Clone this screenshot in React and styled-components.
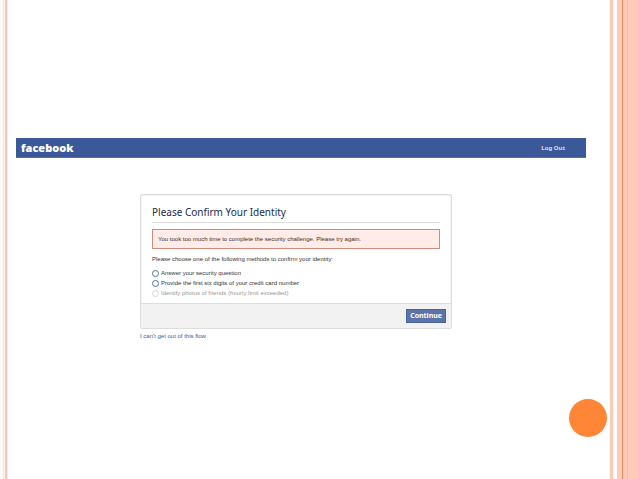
import React from "react";
import styled, { createGlobalStyle } from "styled-components";

const GlobalStyle = createGlobalStyle`
  * {
    box-sizing: border-box;
  }
  body {
    margin: 0;
    background: #ffffff;
    color: #333333;
    font-family: "Liberation Sans", Arial, sans-serif;
    font-size: 6px;
    line-height: 10px;
  }
  button, input {
    font-family: inherit;
    margin: 0;
  }
`;

const Slide = styled.div`
  display: grid;
  grid-template-columns: 16px 1fr 28px;
  min-height: 100vh;
  position: relative;
`;
const Stripes = styled.div`
  display: flex;
`;
const Stripe = styled.div`
  flex: ${props => (props.$wide ? "1" : `0 0 ${props.$size}px`)};
  background: ${props => props.$color};
`;
const Page = styled.div`
  padding: 138px 24px 0 0;
`;
const TopBar = styled.header`
  display: flex;
  align-items: center;
  justify-content: space-between;
  height: 20px;
  padding: 0 21px 0 5px;
  background: #3b5998;
  border-bottom: 1px solid #5470a8;
`;
const Logo = styled.div`
  color: #ffffff;
  font-family: "Open Sans", sans-serif;
  font-size: 11px;
  font-weight: 800;
  line-height: 18px;
`;
const LogOut = styled.a`
  color: #d8dfee;
  font-family: "Noto Sans", "Open Sans", sans-serif;
  font-weight: bold;
  text-decoration: none;
`;
const Main = styled.main`
  padding: 36px 10px 0 0;
`;
const Flow = styled.div`
  max-width: 312px;
  margin: 0 auto;
`;
const Card = styled.form`
  border: 1px solid #dddddd;
  border-radius: 2px;
  box-shadow: inset 0 0 0 1px #f4f4f4;
`;
const Body = styled.div`
  padding: 8px 11px 5px;
`;
const Title = styled.h1`
  margin: 0 0 6px;
  padding-bottom: 1px;
  border-bottom: 1px solid #dddddd;
  color: #1c2a47;
  font-family: "Noto Sans", "Open Sans", sans-serif;
  font-size: 10px;
  font-weight: 400;
  line-height: 18px;
`;
const Alert = styled.div`
  padding: 4px 5px;
  border: 1px solid #cf8a78;
  background: #ffebe8;
`;
const Methods = styled.fieldset`
  margin: 0;
  padding: 5px 0 0;
  border: none;
`;
const Legend = styled.p`
  margin: 0 0 4px;
`;
const Option = styled.label`
  display: flex;
  align-items: center;
  gap: 2px;
  color: ${props => (props.$disabled ? "#999999" : "#333333")};
`;
const Radio = styled.input`
  appearance: none;
  width: 7px;
  height: 7px;
  border: 1px solid #4f7396;
  border-radius: 50%;
  background: #ffffff;
  &:checked {
    background: #4f7396;
  }
  &:disabled {
    border-color: #d5d5d5;
  }
`;
const Footer = styled.div`
  display: flex;
  justify-content: flex-end;
  padding: 5px;
  border-top: 1px solid #dddddd;
  background: #f2f2f2;
`;
const Continue = styled.button`
  height: 14px;
  padding: 0 3px;
  border: 1px solid #4a649d;
  background: #5b74a8;
  color: #ffffff;
  font-family: "Noto Sans", "Open Sans", sans-serif;
  font-size: 7px;
  font-weight: bold;
  line-height: 12px;
`;
const ExitLink = styled.a`
  display: block;
  width: fit-content;
  margin-top: 2px;
  color: #3b5998;
  text-decoration: none;
`;
const Disc = styled.div`
  position: absolute;
  right: 31px;
  bottom: 42px;
  width: 38px;
  height: 38px;
  border-radius: 50%;
  background: #ff8637;
`;

const methods = [
  { id: "question", label: "Answer your security question" },
  { id: "card", label: "Provide the first six digits of your credit card number" },
  {
    id: "photos",
    label: "Identify photos of friends (hourly limit exceeded)",
    disabled: true
  }
];

const App = () => {
  return (
    <React.Fragment>
      <GlobalStyle />
      <Slide>
        <Stripes>
          <Stripe $size={3} $color="#fffaf7" />
          <Stripe $size={1} $color="#fde3d8" />
          <Stripe $size={1} $color="#fff6f1" />
          <Stripe $size={2} $color="#f3c9bb" />
          <Stripe $size={1} $color="#fdeae3" />
          <Stripe $wide $color="#ffffff" />
        </Stripes>
        <Page>
          <TopBar>
            <Logo>facebook</Logo>
            <LogOut href="#">Log Out</LogOut>
          </TopBar>
          <Main>
            <Flow>
              <Card onSubmit={event => event.preventDefault()}>
                <Body>
                  <Title>Please Confirm Your Identity</Title>
                  <Alert role="alert">
                    You took too much time to complete the security challenge.
                    Please try again.
                  </Alert>
                  <Methods aria-labelledby="methods-legend">
                    <Legend id="methods-legend">
                      Please choose one of the following methods to confirm your
                      identity:
                    </Legend>
                    {methods.map(({ id, label, disabled }) => (
                      <Option key={id} htmlFor={id} $disabled={disabled}>
                        <Radio
                          type="radio"
                          name="method"
                          id={id}
                          value={id}
                          disabled={disabled}
                        />
                        {label}
                      </Option>
                    ))}
                  </Methods>
                </Body>
                <Footer>
                  <Continue type="submit">Continue</Continue>
                </Footer>
              </Card>
              <ExitLink href="#">I can't get out of this flow</ExitLink>
            </Flow>
          </Main>
        </Page>
        <Stripes>
          <Stripe $size={3} $color="#ffcbb8" />
          <Stripe $size={4} $color="#ffffff" />
          <Stripe $size={5} $color="#ffcbb8" />
          <Stripe $size={1} $color="#e58a5a" />
          <Stripe $size={4} $color="#ffcbb8" />
          <Stripe $size={1} $color="#f9bda6" />
          <Stripe $wide $color="#ffcbb8" />
        </Stripes>
        <Disc />
      </Slide>
    </React.Fragment>
  );
};

export default App;
